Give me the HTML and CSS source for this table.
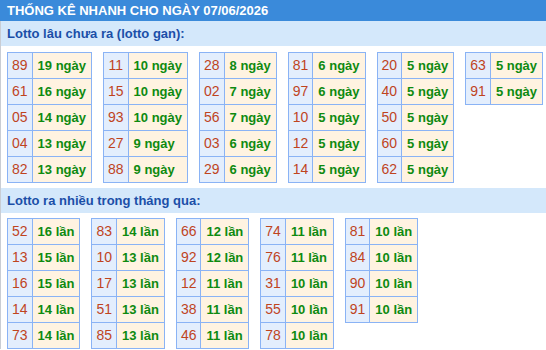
FILE: index.html
```html
<!DOCTYPE html>
<html lang="vi">
<head>
<meta charset="utf-8">
<title>Thống kê nhanh</title>
<link rel="stylesheet" href="styles.css">
</head>
<body>
<div class="box">
  <div class="title">THỐNG KÊ NHANH CHO NGÀY 07/06/2026</div>
  <div class="content">
    <div class="subhead">Lotto lâu chưa ra (lotto gan):</div>
    <div class="tables first">
      <table class="stat"><tr><td class="num">89</td><td class="val">19 ngày</td></tr><tr><td class="num">61</td><td class="val">16 ngày</td></tr><tr><td class="num">05</td><td class="val">14 ngày</td></tr><tr><td class="num">04</td><td class="val">13 ngày</td></tr><tr><td class="num">82</td><td class="val">13 ngày</td></tr></table>
      <table class="stat"><tr><td class="num">11</td><td class="val">10 ngày</td></tr><tr><td class="num">15</td><td class="val">10 ngày</td></tr><tr><td class="num">93</td><td class="val">10 ngày</td></tr><tr><td class="num">27</td><td class="val">9 ngày</td></tr><tr><td class="num">88</td><td class="val">9 ngày</td></tr></table>
      <table class="stat"><tr><td class="num">28</td><td class="val">8 ngày</td></tr><tr><td class="num">02</td><td class="val">7 ngày</td></tr><tr><td class="num">56</td><td class="val">7 ngày</td></tr><tr><td class="num">03</td><td class="val">6 ngày</td></tr><tr><td class="num">29</td><td class="val">6 ngày</td></tr></table>
      <table class="stat"><tr><td class="num">81</td><td class="val">6 ngày</td></tr><tr><td class="num">97</td><td class="val">6 ngày</td></tr><tr><td class="num">10</td><td class="val">5 ngày</td></tr><tr><td class="num">12</td><td class="val">5 ngày</td></tr><tr><td class="num">14</td><td class="val">5 ngày</td></tr></table>
      <table class="stat"><tr><td class="num">20</td><td class="val">5 ngày</td></tr><tr><td class="num">40</td><td class="val">5 ngày</td></tr><tr><td class="num">50</td><td class="val">5 ngày</td></tr><tr><td class="num">60</td><td class="val">5 ngày</td></tr><tr><td class="num">62</td><td class="val">5 ngày</td></tr></table>
      <table class="stat"><tr><td class="num">63</td><td class="val">5 ngày</td></tr><tr><td class="num">91</td><td class="val">5 ngày</td></tr></table>
    </div>
    <div class="subhead">Lotto ra nhiều trong tháng qua:</div>
    <div class="tables second">
      <table class="stat"><tr><td class="num">52</td><td class="val">16 lần</td></tr><tr><td class="num">13</td><td class="val">15 lần</td></tr><tr><td class="num">16</td><td class="val">15 lần</td></tr><tr><td class="num">14</td><td class="val">14 lần</td></tr><tr><td class="num">73</td><td class="val">14 lần</td></tr></table>
      <table class="stat"><tr><td class="num">83</td><td class="val">14 lần</td></tr><tr><td class="num">10</td><td class="val">13 lần</td></tr><tr><td class="num">17</td><td class="val">13 lần</td></tr><tr><td class="num">51</td><td class="val">13 lần</td></tr><tr><td class="num">85</td><td class="val">13 lần</td></tr></table>
      <table class="stat"><tr><td class="num">66</td><td class="val">12 lần</td></tr><tr><td class="num">92</td><td class="val">12 lần</td></tr><tr><td class="num">12</td><td class="val">11 lần</td></tr><tr><td class="num">38</td><td class="val">11 lần</td></tr><tr><td class="num">46</td><td class="val">11 lần</td></tr></table>
      <table class="stat"><tr><td class="num">74</td><td class="val">11 lần</td></tr><tr><td class="num">76</td><td class="val">11 lần</td></tr><tr><td class="num">31</td><td class="val">10 lần</td></tr><tr><td class="num">55</td><td class="val">10 lần</td></tr><tr><td class="num">78</td><td class="val">10 lần</td></tr></table>
      <table class="stat"><tr><td class="num">81</td><td class="val">10 lần</td></tr><tr><td class="num">84</td><td class="val">10 lần</td></tr><tr><td class="num">90</td><td class="val">10 lần</td></tr><tr><td class="num">91</td><td class="val">10 lần</td></tr></table>
    </div>
  </div>
</div>
</body>
</html>
```
FILE: styles.css
```css
html { overflow: hidden; }
body {
  margin: 0;
  font-family: "Liberation Sans", Arial, sans-serif;
  font-size: 13px;
  background: #ffffff;
}
.box { width: 546px; }
.title {
  background: #3a8ada;
  color: #ffffff;
  font-weight: bold;
  font-size: 13px;
  line-height: 21px;
  height: 21px;
  padding-left: 7px;
  white-space: nowrap;
}
.content {
  border-left: 1px solid #c9cdd4;
}
.subhead {
  background: #d4e8fb;
  color: #1b4fa8;
  font-weight: bold;
  font-size: 13px;
  height: 25px;
  line-height: 25px;
  padding-left: 6px;
}
.tables {
  display: flex;
  flex-wrap: nowrap;
  align-items: flex-start;
  gap: 11px;
  padding-left: 6px;
}
.tables.first { padding-top: 6px; padding-bottom: 5px; }
.tables.second { padding-top: 5px; }
.stat {
  border-collapse: collapse;
  flex: none;
}
.stat td {
  border: 1px solid #8ab3f5;
  padding: 5px;
  line-height: 15px;
  white-space: nowrap;
}
.stat .num {
  background: #e3eefd;
  color: #bf441e;
  font-size: 14px;
  padding: 5px 4px;
  text-align: center;
}
.stat .val {
  background: #fff3e1;
  color: #0e8a10;
  font-weight: bold;
}
```
